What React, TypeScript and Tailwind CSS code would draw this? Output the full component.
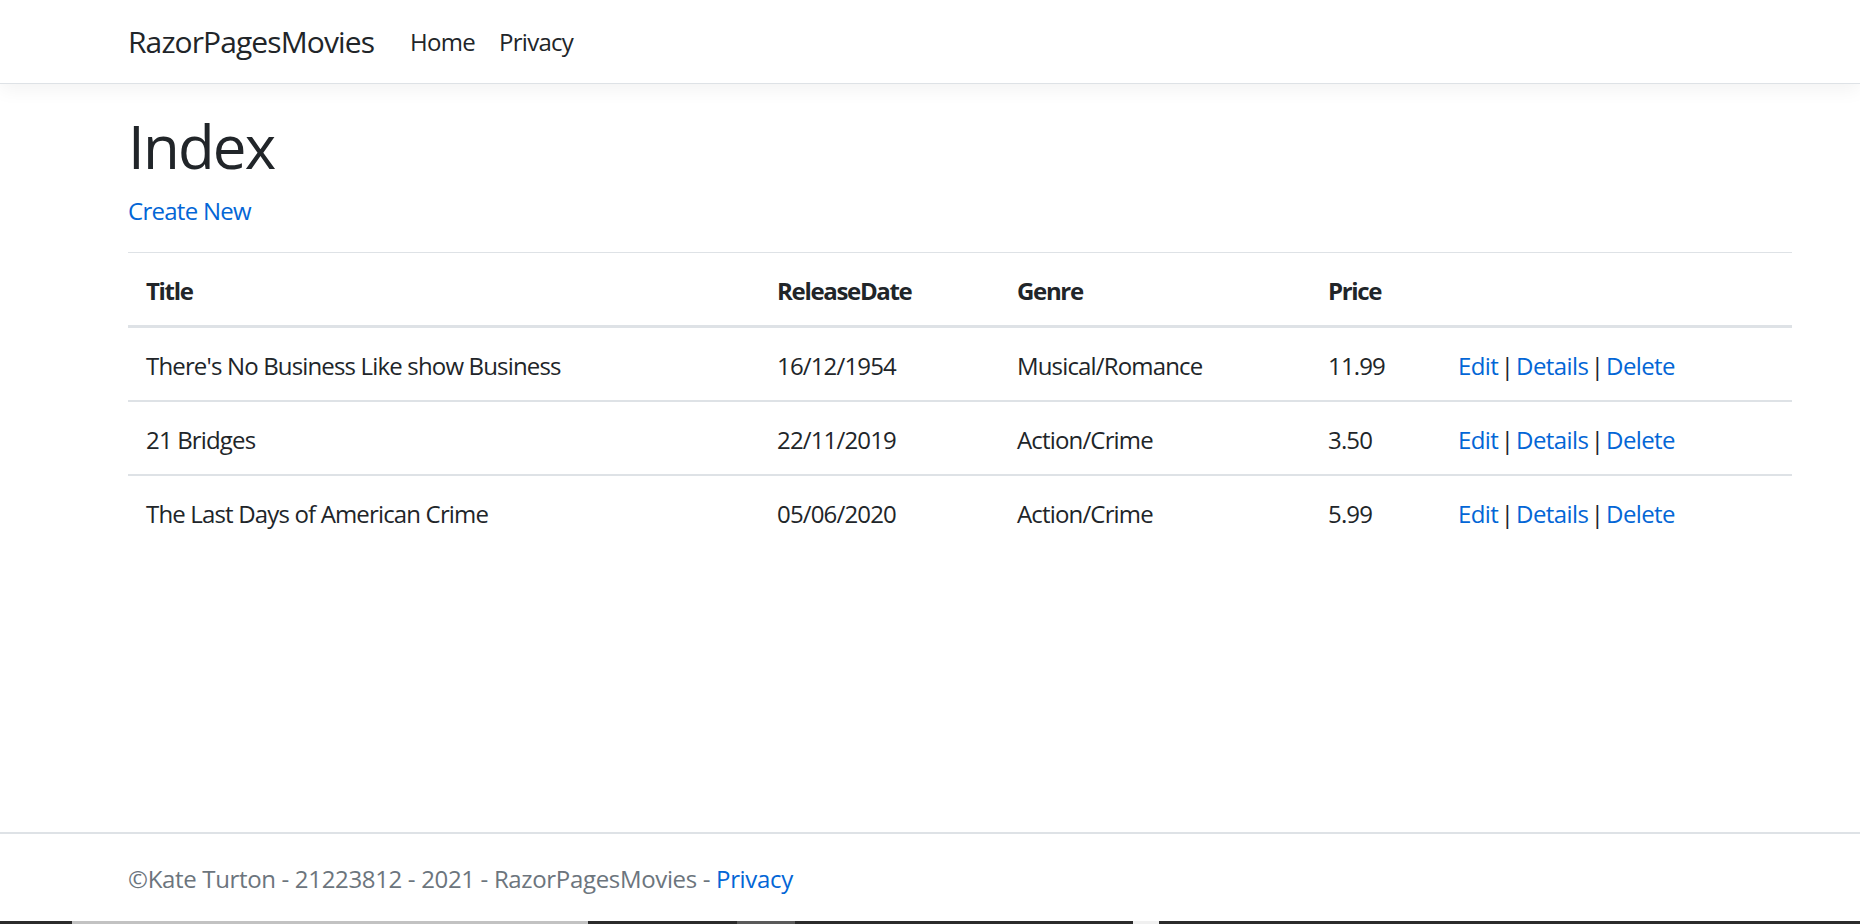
const movies = [
  { id: 1, title: "There's No Business Like show Business", date: '16/12/1954', genre: 'Musical/Romance', price: '11.99' },
  { id: 2, title: '21 Bridges', date: '22/11/2019', genre: 'Action/Crime', price: '3.50' },
  { id: 3, title: 'The Last Days of American Crime', date: '05/06/2020', genre: 'Action/Crime', price: '5.99' },
];

const font = { fontFamily: '"Open Sans", "Noto Sans", sans-serif' };

function Navbar() {
  return (
    <header className="relative z-10 h-[84px] border-b border-[#dee2e6] bg-white shadow-[0_6px_18px_rgba(0,0,0,0.05)]">
      <nav className="flex h-full items-center pl-[128px]">
        <a className="mr-[24px] text-[30px] leading-none tracking-[-0.03em] text-[#212529]">RazorPagesMovies</a>
        <a className="px-[12px] text-[24px] tracking-[-0.03em] text-[#212529]">Home</a>
        <a className="px-[12px] text-[24px] tracking-[-0.03em] text-[#212529]">Privacy</a>
      </nav>
    </header>
  );
}

function MoviesTable() {
  return (
    <table className="w-full border-collapse text-left text-[24px] leading-[36px] tracking-[-0.035em] text-[#212529]">
      <thead>
        <tr className="border-t border-[#dee2e6]">
          <th className="w-[631px] border-b-[3px] border-[#dee2e6] px-[18px] pt-[20px] pb-[16px] font-bold tracking-[-0.055em]">Title</th>
          <th className="w-[240px] border-b-[3px] border-[#dee2e6] px-[18px] pt-[20px] pb-[16px] font-bold tracking-[-0.055em]">ReleaseDate</th>
          <th className="w-[311px] border-b-[3px] border-[#dee2e6] px-[18px] pt-[20px] pb-[16px] font-bold tracking-[-0.055em]">Genre</th>
          <th className="w-[130px] border-b-[3px] border-[#dee2e6] px-[18px] pt-[20px] pb-[16px] font-bold tracking-[-0.055em]">Price</th>
          <th className="border-b-[3px] border-[#dee2e6] px-[18px] pt-[20px] pb-[16px]"></th>
        </tr>
      </thead>
      <tbody>
        {movies.map((m, i) => (
          <tr key={m.id} className={i > 0 ? 'border-t-2 border-[#dee2e6]' : ''}>
            <td className="px-[18px] pt-[20px] pb-[16px]">{m.title}</td>
            <td className="px-[18px] pt-[20px] pb-[16px]">{m.date}</td>
            <td className="px-[18px] pt-[20px] pb-[16px]">{m.genre}</td>
            <td className="px-[18px] pt-[20px] pb-[16px]">{m.price}</td>
            <td className="px-[18px] pt-[20px] pb-[16px] tracking-[-0.025em] [word-spacing:-3px]">
              <a className="text-[#0366d6]">Edit</a> | <a className="text-[#0366d6]">Details</a> |{' '}
              <a className="text-[#0366d6]">Delete</a>
            </td>
          </tr>
        ))}
      </tbody>
    </table>
  );
}

export default function App() {
  return (
    <div style={font} className="flex min-h-[924px] flex-col bg-white">
      <Navbar />
      <main className="flex-1 pl-[128px] pr-[68px] pt-[24px]">
        <h1 className="mb-[12px] pt-[4px] text-[60px] font-medium leading-[68px] tracking-[-0.03em] text-[#212529]">Index</h1>
        <p className="mb-[24px] pt-[2px] text-[24px] leading-[34px] tracking-[-0.03em]">
          <a className="text-[#0366d6]">Create New</a>
        </p>
        <MoviesTable />
      </main>
      <footer className="h-[89px] border-t-2 border-[#dee2e6] pl-[128px] pt-[3px] text-[24px] leading-[84px] tracking-[-0.014em] text-[#6c757d]">
        ©Kate Turton - 21223812 - 2021 - RazorPagesMovies - <a className="text-[#0366d6]">Privacy</a>
      </footer>
      <div className="flex h-[3px]">
        <div className="w-[72px] bg-[#2b2b2b]" />
        <div className="w-[516px] bg-[#c2c2c2]" />
        <div className="w-[149px] bg-[#2b2b2b]" />
        <div className="w-[58px] bg-[#5a5a5a]" />
        <div className="w-[338px] bg-[#2b2b2b]" />
        <div className="w-[26px] bg-[#f0f0f0]" />
        <div className="flex-1 bg-[#2b2b2b]" />
      </div>
    </div>
  );
}
